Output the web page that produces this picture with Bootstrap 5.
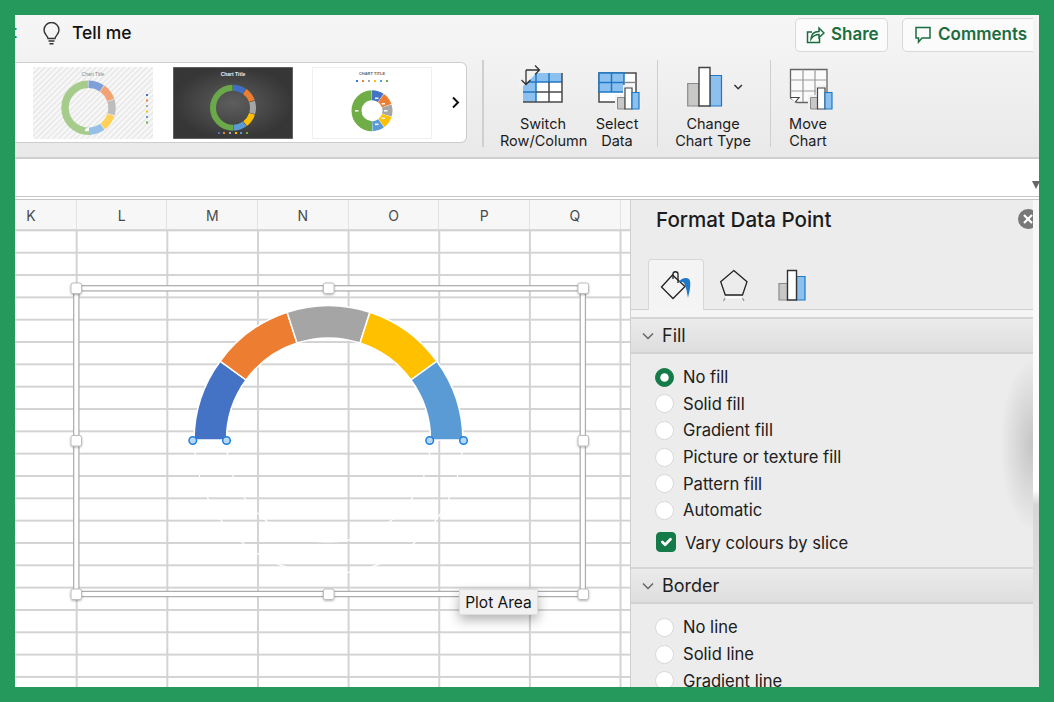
<!DOCTYPE html>
<html lang="en">
<head>
<meta charset="utf-8">
<title>Format Data Point</title>
<link href="https://cdn.jsdelivr.net/npm/bootstrap@5.3.0/dist/css/bootstrap.min.css" rel="stylesheet">
<style>
html,body{margin:0;height:702px;overflow:hidden;background:#24995b}
body{padding:15px;font-family:"Inter","Liberation Sans",sans-serif;color:#1f1f1f}
.shot{width:1024px;height:672px;background:#fff;overflow:hidden;position:relative}
.rib{height:144px;flex:none;background:linear-gradient(#f6f6f6,#e9e9e9);border-bottom:2px solid #cfcfcf}
.ribin{width:1018px;height:142px;overflow:hidden}
.toprow{height:47px;padding-bottom:9px}
.tail{color:#1e7a4a;font-weight:600;font-size:17px;margin:0 0 2px -4px;width:6px}
.bulb{margin:0 13px 2px 26px}
.tell{font-size:17.5px;font-weight:500;color:#111;margin-bottom:2px;margin-left:-1px}
.cloud{height:33.5px;background:#fbfbfb;border:1.5px solid #d8d8d8;border-radius:5px;color:#1b6d40;font-weight:600;font-size:17px;padding:0;display:flex;align-items:center;flex:none;margin-top:2px}
.cloud:hover{background:#fbfbfb;color:#1b6d40;border-color:#d8d8d8}
.sharebtn{width:93px;gap:6px;padding-left:10px}
.commbtn{width:141px;gap:6px;padding-left:11px;margin-left:14px;margin-right:-10px}
.gallery{width:452px;height:81px;background:#fff;border:1.5px solid #cdcdcd;border-left:0;border-radius:0 6px 6px 0;padding:4px 0 0 18px;gap:19.5px;flex:none}
.thumb{display:block;width:120px;height:72px;flex:none}
.nextb{margin-top:29px;margin-left:-1px;flex:none}
.sepv{width:1.5px;height:87px;background:#cfcfcf;margin-top:-2px;flex:none}
.tool{flex:none;padding-top:3px;font-size:14.5px;line-height:17px;color:#1c1c1c;text-align:center;white-space:nowrap}
.tool svg{display:block;margin:0 auto 5px}
.fbar{height:41px;flex:none;background:#fff;border-bottom:4px double #c6c6c6;position:relative}
.fcaret{position:absolute;right:-1px;top:22px;width:0;height:0;border-left:4px solid transparent;border-right:4px solid transparent;border-top:8px solid #666}
.workarea{height:487px}
.sheetbox{width:615px;flex:none;position:relative;background:#fff}
.heads{height:30px;background:#f7f7f7;overflow:hidden;margin-left:-28.85px;border-bottom:1px solid #d8d8d8}
.heads div{width:90.65px;flex:none;border-right:1.5px solid #e2e2e2;text-align:center;font-size:14px;line-height:31px;color:#4a4a4a}
.cells{height:457px;position:relative;background-color:#fff;
 background-image:linear-gradient(#d3d3d3 0 1.5px,transparent 1.5px),linear-gradient(90deg,#d3d3d3 0 1.5px,transparent 1.5px);
 background-size:90.65px 22.33px;background-position:60.7px -0.6px}
.overlay{position:absolute;left:0;top:0;width:615px;height:457px}
.tip{position:absolute;left:444px;top:359px;width:79px;height:26px;background:#f1f1f1;border:1px solid #dedede;box-shadow:0 5px 12px rgba(0,0,0,.3);font-size:15.5px;line-height:25px;text-align:center;color:#111}
.pane{width:403px;flex:none;background:#ececec;border-left:1.5px solid #cfcfcf;position:relative;overflow:hidden}
.panehead{height:59px;padding:6px 0 0 25px;font-size:20.6px;font-weight:500;line-height:28px;color:#1b1b1b}
.xbtn{position:absolute;right:-5px;top:9px;width:20px;height:20px;border-radius:50%;background:#787878}
.tabsrow{height:51px;border-bottom:1.5px solid #cfcfcf;padding-left:17px}
.tabon{width:56px;height:51px;background:#f4f4f4;border:1.5px solid #d6d6d6;border-bottom:0;border-radius:4px 4px 0 0;position:relative;z-index:1;flex:none}
.tabic{flex:none}
.gapline{height:7px;background:#f5f5f5}
.secthead{height:37px;background:linear-gradient(#ebebeb,#dedede);border-top:2px solid #d6d6d6;border-bottom:2px solid #d2d2d2;padding-left:11px;gap:8px;font-size:18px;line-height:30px;color:#1f1f1f}
.optlist{padding:10px 0 12px 24px}
.optrow{height:26.6px;gap:9px;font-size:16.6px;line-height:24px;color:#202020}
.optrow .form-check-input{width:19px;height:19px;margin:0;flex:none;background-color:#fff;border:1.5px solid #d9d9d9;box-shadow:none}
.optrow .form-check-input:checked{background-color:#147a48;border-color:#147a48}
.optrow .form-check-input[type=checkbox]{width:20px;height:20px;border-radius:4px;margin-left:1px}
.vary{margin-top:5px}
.varytext{margin-top:3px}
.paneglow{position:absolute;right:0;top:160px;width:32px;height:170px;background:radial-gradient(ellipse at right center,rgba(0,0,0,.17),rgba(0,0,0,0) 72%);pointer-events:none}
.strip{width:6px;flex:none;background:linear-gradient(#f7f7f7 0,#fff 290px,#d6d6d6 305px,#ececec 100%)}
</style>
</head>
<body>
<div class="shot d-flex flex-column">
  <div class="rib">
    <div class="ribin">
      <div class="toprow d-flex align-items-center">
        <span class="tail">t</span>
        <svg class="bulb" width="17" height="23" viewBox="0 0 17 23" fill="none" stroke="#333" stroke-width="1.4"><path d="M5 16.5C4.6 13.5 1 12 1 8a7.5 7.5 0 0 1 15 0c0 4-3.6 5.5-4 8.5z"/><path d="M5.5 19h6M6.5 21.8h4"/></svg>
        <span class="tell">Tell me</span>
        <button class="btn cloud sharebtn ms-auto" type="button">
          <svg width="19" height="18" viewBox="0 0 19 18" fill="none" stroke="#1b6d40" stroke-width="1.5"><path d="M6 6H1.5v10.5h12V12"/><path d="M5 13c.3-5 3.5-7.5 8-7.5V2l5 5-5 4.5V8.5c-3 0-6 1.5-8 4.5z"/></svg>
          Share
        </button>
        <button class="btn cloud commbtn" type="button">
          <svg width="18" height="18" viewBox="0 0 18 18" fill="none" stroke="#1b6d40" stroke-width="1.5"><path d="M2 1.5h14V12H8l-3.5 4v-4H2z"/></svg>
          Comments
        </button>
      </div>
      <div class="d-flex">
        <div class="gallery d-flex">
          <svg class="thumb" viewBox="0 0 120 72">
            <defs><pattern id="hatch" width="4" height="4" patternUnits="userSpaceOnUse" patternTransform="rotate(45)"><rect width="4" height="4" fill="#f8f8f8"/><rect width="1.5" height="4" fill="#e6e6e6"/></pattern></defs>
            <rect width="120" height="72" fill="url(#hatch)"/>
            <text x="60" y="8.5" font-size="5" text-anchor="middle" fill="#8a8a8a" font-family="Liberation Sans">Chart Title</text>
            <g fill="none" stroke-width="7.5" transform="rotate(-90 55.5 40.7)">
              <circle cx="55.5" cy="40.7" r="23.5" pathLength="100" stroke="#a6cc8c" stroke-dasharray="49.6 50.4" stroke-dashoffset="-50"/>
              <circle cx="55.5" cy="40.7" r="23.5" pathLength="100" stroke="#7f9fd8" stroke-dasharray="9.6 90.4"/>
              <circle cx="55.5" cy="40.7" r="23.5" pathLength="100" stroke="#f2a273" stroke-dasharray="9.6 90.4" stroke-dashoffset="-10"/>
              <circle cx="55.5" cy="40.7" r="23.5" pathLength="100" stroke="#bdbdbd" stroke-dasharray="9.6 90.4" stroke-dashoffset="-20"/>
              <circle cx="55.5" cy="40.7" r="23.5" pathLength="100" stroke="#ffd257" stroke-dasharray="9.6 90.4" stroke-dashoffset="-30"/>
              <circle cx="55.5" cy="40.7" r="23.5" pathLength="100" stroke="#97c0e8" stroke-dasharray="9.6 90.4" stroke-dashoffset="-40"/>
            </g>
            <g><rect x="113" y="27" width="2" height="2" fill="#4472c4"/><rect x="113" y="32.5" width="2" height="2" fill="#ed7d31"/><rect x="113" y="38" width="2" height="2" fill="#a5a5a5"/><rect x="113" y="43.5" width="2" height="2" fill="#ffc000"/><rect x="113" y="49" width="2" height="2" fill="#5b9bd5"/><rect x="113" y="54.5" width="2" height="2" fill="#70ad47"/></g>
          </svg>
          <svg class="thumb" viewBox="0 0 120 72">
            <defs><radialGradient id="darkbg"><stop offset="0" stop-color="#5e5e5e"/><stop offset="1" stop-color="#363636"/></radialGradient></defs>
            <rect width="120" height="72" fill="url(#darkbg)" stroke="#8a8a8a"/>
            <text x="60" y="8.5" font-size="5" font-weight="700" text-anchor="middle" fill="#eee" font-family="Liberation Sans">Chart Title</text>
            <g fill="none" stroke-width="6" transform="rotate(-90 60 40.7)">
              <circle cx="60" cy="40.7" r="20" pathLength="100" stroke="#6aa84a" stroke-dasharray="49.6 50.4" stroke-dashoffset="-50"/>
              <circle cx="60" cy="40.7" r="20" pathLength="100" stroke="#3f6fc4" stroke-dasharray="9.6 90.4"/>
              <circle cx="60" cy="40.7" r="20" pathLength="100" stroke="#ed7d31" stroke-dasharray="9.6 90.4" stroke-dashoffset="-10"/>
              <circle cx="60" cy="40.7" r="20" pathLength="100" stroke="#a5a5a5" stroke-dasharray="9.6 90.4" stroke-dashoffset="-20"/>
              <circle cx="60" cy="40.7" r="20" pathLength="100" stroke="#ffc000" stroke-dasharray="9.6 90.4" stroke-dashoffset="-30"/>
              <circle cx="60" cy="40.7" r="20" pathLength="100" stroke="#5b9bd5" stroke-dasharray="9.6 90.4" stroke-dashoffset="-40"/>
            </g>
            <g><rect x="45" y="65" width="2" height="2" fill="#4472c4"/><rect x="50" y="65" width="2" height="2" fill="#ed7d31"/><rect x="56" y="65" width="2" height="2" fill="#a5a5a5"/><rect x="62" y="65" width="2" height="2" fill="#ffc000"/><rect x="67" y="65" width="2" height="2" fill="#5b9bd5"/><rect x="73" y="65" width="2" height="2" fill="#70ad47"/></g>
          </svg>
          <svg class="thumb" viewBox="0 0 120 72">
            <rect x=".5" y=".5" width="119" height="71" fill="#fff" stroke="#f0f0f0"/>
            <text x="60" y="7.5" font-size="4" font-weight="700" text-anchor="middle" fill="#666" font-family="Liberation Sans">CHART TITLE</text>
            <g><rect x="44" y="13" width="2" height="2" fill="#4472c4"/><rect x="50" y="13" width="2" height="2" fill="#ed7d31"/><rect x="56" y="13" width="2" height="2" fill="#a5a5a5"/><rect x="62" y="13" width="2" height="2" fill="#ffc000"/><rect x="68" y="13" width="2" height="2" fill="#5b9bd5"/><rect x="74" y="13" width="2" height="2" fill="#70ad47"/></g>
            <g fill="none" stroke-width="10" transform="rotate(-90 60 43.7)">
              <circle cx="60" cy="43.7" r="15.5" pathLength="100" stroke="#70ad47" stroke-dasharray="49.6 50.4" stroke-dashoffset="-50"/>
              <circle cx="60" cy="43.7" r="15.5" pathLength="100" stroke="#4472c4" stroke-dasharray="9.6 90.4"/>
              <circle cx="60" cy="43.7" r="15.5" pathLength="100" stroke="#ed7d31" stroke-dasharray="9.6 90.4" stroke-dashoffset="-10"/>
              <circle cx="60" cy="43.7" r="15.5" pathLength="100" stroke="#a5a5a5" stroke-dasharray="9.6 90.4" stroke-dashoffset="-20"/>
              <circle cx="60" cy="43.7" r="15.5" pathLength="100" stroke="#ffc000" stroke-dasharray="9.6 90.4" stroke-dashoffset="-30"/>
              <circle cx="60" cy="43.7" r="15.5" pathLength="100" stroke="#5b9bd5" stroke-dasharray="9.6 90.4" stroke-dashoffset="-40"/>
            </g>
            <g fill="#f4f4f4"><rect x="63" y="30.5" width="3.5" height="1.6"/><rect x="69.5" y="36" width="3.5" height="1.6"/><rect x="72" y="43" width="3.5" height="1.6"/><rect x="69.5" y="50.5" width="3.5" height="1.6"/><rect x="63" y="56.5" width="3.5" height="1.6"/><rect x="43" y="43" width="3.5" height="1.6"/></g>
          </svg>
          <svg class="nextb" width="9" height="13" viewBox="0 0 9 13" fill="none" stroke="#111" stroke-width="2"><path d="M2 1.5l5 5-5 5"/></svg>
        </div>
        <div class="sepv" style="margin-left:15px"></div>
        <div class="tool" style="width:86px;margin-left:16.5px">
          <svg width="52" height="45" viewBox="517 65 52 45">
            <path d="M523 73H562V102H523z" fill="#fff"/>
            <path d="M523 73H562V82H536V102H523z" fill="#8cc0ee"/>
            <path d="M536 73V102M549 73V82M523 82H562M523 92H536" stroke="#1e78c8" stroke-width="1.5" fill="none"/>
            <path d="M549 82V102M536 92H562M523 102H562V73" stroke="#4a4a4a" stroke-width="1.5" fill="none"/>
            <path d="M519 65H545L519 90z" fill="#f2f2f2"/>
            <path d="M526 70H539M535 65.5l4.5 4.5-4.5 4.5M526 70V84M521.5 80l4.5 4.5 4.5-4.5" stroke="#333" stroke-width="1.3" fill="none"/>
          </svg>
          Switch<br>Row/Column
        </div>
        <div class="tool" style="width:44px;margin-left:9px">
          <svg width="44" height="45" viewBox="595 65 44 45" overflow="visible">
            <path d="M599 73H636V102H599z" fill="#fff" stroke="#4a4a4a" stroke-width="1.5"/>
            <path d="M599 73H624V92H599z" fill="#8cc0ee"/>
            <path d="M599 73H624V92H599zM611.5 73V92M599 82.5H624" stroke="#1e78c8" stroke-width="1.5" fill="none"/>
            <path d="M624 82.5H636" stroke="#888" stroke-width="1.5"/>
            <path d="M615 95H641V110H615z" fill="#f2f2f2"/><path d="M623 85H633V95H623z" fill="#f2f2f2"/>
            <path d="M617.5 97.5H625V109H617.5z" fill="#c8c8c6" stroke="#8a8a8a"/>
            <path d="M625 88H632V109H625z" fill="#fff" stroke="#444" stroke-width="1.2"/>
            <path d="M632 92.5H639V109H632z" fill="#8cc0ee" stroke="#1e78c8" stroke-width="1.2"/>
          </svg>
          Select<br>Data
        </div>
        <div class="sepv" style="margin-left:17.5px"></div>
        <div class="tool" style="width:76px;margin-left:17px">
          <svg width="76" height="45" viewBox="675 65 76 45">
            <path d="M687.7 83.5H699V106H687.7z" fill="#c8c8c6" stroke="#8a8a8a" stroke-width="1.2"/>
            <path d="M710 75.5H721.5V106H710z" fill="#8cc0ee" stroke="#1e78c8" stroke-width="1.2"/>
            <path d="M699 67.5H710V106H699z" fill="#fff" stroke="#444" stroke-width="1.4"/>
            <path d="M734.5 85l3.7 3.7 3.7-3.7" stroke="#333" stroke-width="1.5" fill="none"/>
          </svg>
          Change<br>Chart Type
        </div>
        <div class="sepv" style="margin-left:18.5px"></div>
        <div class="tool" style="width:50px;margin-left:12px">
          <svg width="50" height="45" viewBox="783 65 50 45">
            <path d="M790.5 69.5H827V102.5H797L790.5 98z" fill="#fafafa" stroke="#666" stroke-width="1.3"/>
            <path d="M790.5 80H827M790.5 91H827M803 69.5V102M815 69.5V102" stroke="#9a9a9a" stroke-width="1.2" fill="none"/>
            <path d="M790.5 97.5H799L795 102.5" fill="#fff" stroke="#444" stroke-width="1.2"/>
            <path d="M808 95H833V110H808z" fill="#f2f2f2"/><path d="M816 85H826V95H816z" fill="#f2f2f2"/>
            <path d="M810.5 97.5H817.5V109H810.5z" fill="#c8c8c6" stroke="#8a8a8a"/>
            <path d="M817.5 88H825V109H817.5z" fill="#fff" stroke="#444" stroke-width="1.2"/>
            <path d="M825 92.5H832V109H825z" fill="#8cc0ee" stroke="#1e78c8" stroke-width="1.2"/>
          </svg>
          Move<br>Chart
        </div>
      </div>
    </div>
  </div>
  <div class="fbar"><span class="fcaret"></span></div>
  <div class="workarea d-flex">
    <div class="sheetbox overflow-hidden">
      <div class="heads d-flex"><div>K</div><div>L</div><div>M</div><div>N</div><div>O</div><div>P</div><div>Q</div></div>
      <div class="cells">
        <svg class="overlay" viewBox="15 230 615 457" fill="none">
          <defs><filter id="hshadow" x="-30%" y="-30%" width="160%" height="160%"><feDropShadow dx="0" dy="1" stdDeviation="1" flood-color="#000" flood-opacity=".3"/></filter></defs>
          <rect x="76.3" y="288.3" width="506.5" height="305.7" stroke="#adadad" stroke-width="6.5"/>
          <rect x="76.3" y="288.3" width="506.5" height="305.7" stroke="#fff" stroke-width="4"/>
          <g stroke="#fff" stroke-width="1.2">
            <path d="M194.5 440A134 134 0 0 0 462.5 440"/>
            <path d="M226.5 440A102 102 0 0 0 430.5 440"/>
          </g>
          <g stroke="#fff" stroke-width="1.5">
            <path d="M194 440A134.5 134.5 0 0 1 220.1 361.2L246 380A102 102 0 0 0 226.5 440z" fill="#4472c4"/>
            <path d="M220.1 361.2A134.5 134.5 0 0 1 287.1 312.2L297 343A102 102 0 0 0 246 380z" fill="#ed7d31"/>
            <path d="M287.1 312.2A134.5 134.5 0 0 1 369.9 312.2L360 343A102 102 0 0 0 297 343z" fill="#a5a5a5"/>
            <path d="M369.9 312.2A134.5 134.5 0 0 1 436.9 361.2L411 380A102 102 0 0 0 360 343z" fill="#ffc000"/>
            <path d="M436.9 361.2A134.5 134.5 0 0 1 463 440L430.5 440A102 102 0 0 0 411 380z" fill="#5b9bd5"/>
          </g>
          <g fill="#b9d7f2" stroke="#1a80e2" stroke-width="1.5">
            <circle cx="192.8" cy="440.5" r="3.8"/><circle cx="226.5" cy="440.5" r="3.8"/><circle cx="429.7" cy="440.5" r="3.8"/><circle cx="463.5" cy="440.5" r="3.8"/>
          </g>
          <g fill="#fff" stroke="#bdbdbd" filter="url(#hshadow)">
            <rect x="71" y="283" width="10.5" height="10.5" rx="2"/><rect x="323.5" y="283" width="10.5" height="10.5" rx="2"/><rect x="578" y="283" width="10.5" height="10.5" rx="2"/>
            <rect x="71" y="435.5" width="10.5" height="10.5" rx="2"/><rect x="578" y="435.5" width="10.5" height="10.5" rx="2"/>
            <rect x="71" y="589" width="10.5" height="10.5" rx="2"/><rect x="323.5" y="589" width="10.5" height="10.5" rx="2"/><rect x="578" y="589" width="10.5" height="10.5" rx="2"/>
          </g>
        </svg>
        <div class="tip">Plot Area</div>
      </div>
    </div>
    <div class="pane">
      <div class="panehead">Format Data Point</div>
      <span class="xbtn d-flex align-items-center justify-content-center"><svg width="10" height="10" viewBox="0 0 10 10" stroke="#fff" stroke-width="2.2"><path d="M1 1l8 8M9 1l-8 8"/></svg></span>
      <div class="tabsrow d-flex">
        <div class="tabon">
          <svg class="d-block" width="53" height="50" viewBox="650 260 53 50" fill="none">
            <path d="M662.5 287l11-12 12.5 11.5-12 12z" stroke="#222" stroke-width="1.3"/>
            <path d="M674 279v-5c0-3 5-3 5 0v9" stroke="#222" stroke-width="1.3"/>
            <path d="M680 282c2-4 10-6 11-1 1 6-1 12-2 17-1-6-2-13-5-16z" fill="#1e78c8"/>
          </svg>
        </div>
        <svg class="tabic" width="56" height="50" viewBox="706.5 259 56 50" fill="none" style="margin-left:2px">
          <path d="M734.3 270.5L747.5 281.7 743 295H725.8L721.2 281.7z" stroke="#222" stroke-width="1.3"/>
          <path d="M725.5 298l-1.5 3M743 298l1.5 3" stroke="#999" stroke-width="1.3"/>
          <path d="M726 297.5H742.5" stroke="#fff" stroke-width="2"/>
        </svg>
        <svg class="tabic" width="56" height="50" viewBox="762.5 259 56 50" fill="none">
          <path d="M779.5 283.5H788V300H779.5z" fill="#c8c8c6" stroke="#8a8a8a" stroke-width="1.2"/>
          <path d="M797 276.5H805.5V300H797z" fill="#8cc0ee" stroke="#1e78c8" stroke-width="1.2"/>
          <path d="M788 270.5H797V300H788z" fill="#fff" stroke="#333" stroke-width="1.4"/>
        </svg>
      </div>
      <div class="gapline"></div>
      <div class="secthead d-flex align-items-center">
        <svg width="12" height="8" viewBox="0 0 12 8" fill="none" stroke="#666" stroke-width="1.5"><path d="M1 1.5l5 5 5-5"/></svg>
        Fill
      </div>
      <div class="optlist">
        <label class="optrow d-flex align-items-center"><input class="form-check-input" type="radio" name="fl" checked>No fill</label>
        <label class="optrow d-flex align-items-center"><input class="form-check-input" type="radio" name="fl">Solid fill</label>
        <label class="optrow d-flex align-items-center"><input class="form-check-input" type="radio" name="fl">Gradient fill</label>
        <label class="optrow d-flex align-items-center"><input class="form-check-input" type="radio" name="fl">Picture or texture fill</label>
        <label class="optrow d-flex align-items-center"><input class="form-check-input" type="radio" name="fl">Pattern fill</label>
        <label class="optrow d-flex align-items-center"><input class="form-check-input" type="radio" name="fl">Automatic</label>
        <label class="optrow vary d-flex align-items-center"><input class="form-check-input" type="checkbox" checked><span class="varytext">Vary colours by slice</span></label>
      </div>
      <div class="secthead d-flex align-items-center">
        <svg width="12" height="8" viewBox="0 0 12 8" fill="none" stroke="#666" stroke-width="1.5"><path d="M1 1.5l5 5 5-5"/></svg>
        Border
      </div>
      <div class="optlist">
        <label class="optrow d-flex align-items-center"><input class="form-check-input" type="radio" name="bd">No line</label>
        <label class="optrow d-flex align-items-center"><input class="form-check-input" type="radio" name="bd">Solid line</label>
        <label class="optrow d-flex align-items-center"><input class="form-check-input" type="radio" name="bd">Gradient line</label>
      </div>
      <div class="paneglow"></div>
    </div>
    <div class="strip"></div>
  </div>
</div>
<script src="https://cdn.jsdelivr.net/npm/bootstrap@5.3.0/dist/js/bootstrap.bundle.min.js"></script>
</body>
</html>
